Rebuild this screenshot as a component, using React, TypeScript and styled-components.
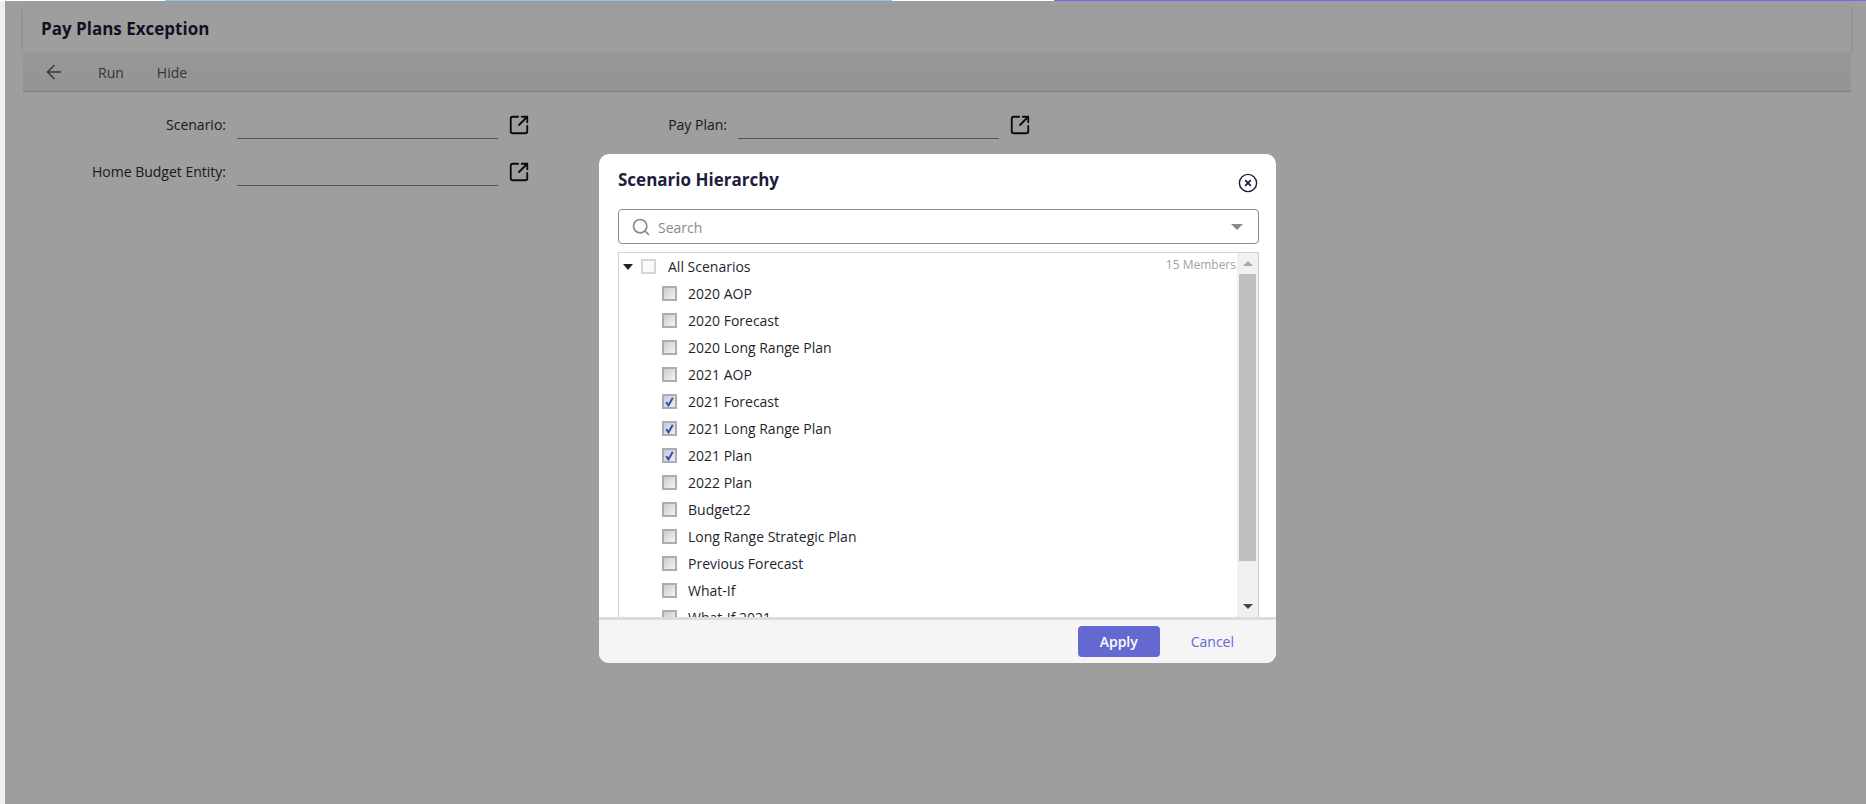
import { ArrowLeft, Search, SquareArrowOutUpRight } from "lucide-react";
import styled, { createGlobalStyle } from "styled-components";

const GlobalStyle = createGlobalStyle`
  html, body {
    margin: 0;
    padding: 0;
    height: 100%;
    overflow: hidden;
    background: #fff;
    font-family: "Open Sans", "Noto Sans", sans-serif;
  }
  * { box-sizing: border-box; }
`;

const Shell = styled.div`
  position: relative;
  width: 1866px;
  height: 804px;
  overflow: hidden;
  display: flex;
  flex-direction: column;
`;
const TopStrip = styled.div`
  display: flex;
  height: 1px;
  flex: none;
`;
const StripPart = styled.div<{ $w: string; $c: string }>`
  width: ${(p) => p.$w};
  background: ${(p) => p.$c};
`;
const Body = styled.div`
  flex: 1;
  display: flex;
`;
const Rail = styled.div`
  width: 5px;
  background: #efefef;
`;
const Main = styled.main`
  flex: 1;
  padding: 6px 15px 0 18px;
`;
const TitleCard = styled.header`
  height: 45px;
  padding: 0 18px 2px;
  display: flex;
  align-items: center;
  background: #fff;
  box-shadow: 0 1px 3px rgba(0, 0, 0, 0.2);
  font-size: 17px;
  font-weight: 700;
  color: #1d1d3d;
`;
const Toolbar = styled.nav`
  height: 40px;
  display: flex;
  align-items: center;
  padding: 1px 0 0 20px;
  background: linear-gradient(#f6f6f6, #eeeeee);
  border-bottom: 1px solid #cfcfcf;
  font-size: 14px;
  font-weight: 500;
  color: #555;
`;
const ToolButton = styled.span<{ $gap: number }>`
  display: inline-flex;
  margin-right: ${(p) => p.$gap}px;
`;
const FormGrid = styled.div`
  display: grid;
  grid-template-columns: 523px 540px;
  row-gap: 19px;
  padding-top: 19px;
`;
const Field = styled.div<{ $labelW: number }>`
  display: grid;
  grid-template-columns: ${(p) => p.$labelW}px 261px 22px;
  column-gap: 10px;
  align-items: center;
  height: 28px;
`;
const Label = styled.label`
  text-align: right;
  font-size: 14px;
  color: #2c2c2c;
  padding: 0 1px 2px 0;
`;
const Underline = styled.div`
  height: 28px;
  border-bottom: 1px solid #8a8a8a;
`;
const OpenIcon = styled(SquareArrowOutUpRight)`
  width: 22px;
  height: 22px;
  color: #111;
`;

const Overlay = styled.div`
  position: absolute;
  inset: 1px 0 0 5px;
  background: rgba(0, 0, 0, 0.38);
  padding: 153px 0 0 594px;
`;
const Modal = styled.section`
  width: 677px;
  height: 509px;
  display: flex;
  flex-direction: column;
  background: #fff;
  border-radius: 10px;
  overflow: hidden;
`;
const ModalHead = styled.div`
  height: 55px;
  padding: 0 18px 4px 19px;
  display: flex;
  justify-content: space-between;
  align-items: center;
`;
const ModalTitle = styled.h2`
  margin: 0;
  font-size: 17px;
  font-weight: 700;
  color: #1d1d3d;
`;
const CloseIcon = styled.svg`
  width: 20px;
  height: 20px;
  margin-top: 6px;
`;
const SearchBox = styled.div`
  margin: 0 17px 0 19px;
  height: 35px;
  display: flex;
  align-items: center;
  padding: 0 15px 0 12px;
  border: 1px solid #8f8f8f;
  border-radius: 4px;
  font-size: 14px;
  color: #8a8a8a;
  flex: none;
`;
const SearchGlyph = styled(Search)`
  width: 20px;
  height: 20px;
  color: #8a8a8a;
  margin-right: 7px;
`;
const Placeholder = styled.span`
  flex: 1;
  padding-top: 1px;
`;
const Caret = styled.span<{ $dir: "up" | "down"; $c: string; $w: number }>`
  width: 0;
  height: 0;
  border-left: ${(p) => p.$w}px solid transparent;
  border-right: ${(p) => p.$w}px solid transparent;
  ${(p) =>
    p.$dir === "down"
      ? `border-top: ${p.$w}px solid ${p.$c};`
      : `border-bottom: ${p.$w}px solid ${p.$c};`}
`;
const ListBox = styled.div`
  margin: 8px 17px 0 19px;
  flex: 1;
  min-height: 0;
  display: flex;
  border: 1px solid #d2d2d2;
  border-bottom: 0;
  overflow: hidden;
`;
const Tree = styled.div`
  flex: 1;
  position: relative;
  overflow: hidden;
`;
const Row = styled.div<{ $indent: number }>`
  height: 27px;
  display: flex;
  align-items: center;
  padding-left: ${(p) => p.$indent}px;
  font-size: 14px;
  color: #1f1f30;
  white-space: nowrap;
`;
const RootCaret = styled.span`
  width: 0;
  height: 0;
  margin-right: 8px;
  border-left: 5px solid transparent;
  border-right: 5px solid transparent;
  border-top: 6px solid #222;
`;
const Check = styled.span<{ $root?: boolean; $on?: boolean }>`
  width: 15px;
  height: 15px;
  flex: none;
  margin-right: ${(p) => (p.$root ? 12 : 11)}px;
  display: flex;
  align-items: center;
  justify-content: center;
  border: 2px solid ${(p) => (p.$root ? "#d6d6d6" : "#adadad")};
  background: ${(p) =>
    p.$root
      ? "#fafafa"
      : p.$on
        ? "linear-gradient(135deg, #c6c9da, #eceef5)"
        : "linear-gradient(135deg, #cbcbcb, #f4f4f4)"};
`;
const MemberCount = styled.span`
  position: absolute;
  top: 3px;
  right: 1px;
  font-size: 12px;
  color: #a2a2a2;
`;
const Scrollbar = styled.div`
  width: 21px;
  flex: none;
  display: flex;
  flex-direction: column;
  align-items: center;
  background: #f0f0f0;
`;
const ScrollEnd = styled.div`
  height: 21px;
  flex: none;
  display: flex;
  align-items: center;
  justify-content: center;
`;
const Thumb = styled.div`
  width: 17px;
  height: 287px;
  background: #bfbfbf;
`;
const Spacer = styled.div`
  flex: 1;
`;
const Footer = styled.footer`
  height: 46px;
  flex: none;
  display: flex;
  align-items: center;
  padding: 0 42px 0 0;
  justify-content: flex-end;
  gap: 31px;
  background: #f5f5f5;
  border-top: 3px solid #dcdcdc;
`;
const ApplyButton = styled.button`
  width: 82px;
  height: 31px;
  border: 0;
  border-radius: 4px;
  background: #6369d1;
  color: #fff;
  font: 600 14px "Open Sans", sans-serif;
`;
const CancelButton = styled.button`
  border: 0;
  padding: 0;
  background: none;
  color: #6369d1;
  font: 400 14px "Open Sans", sans-serif;
`;

const scenarios = [
  { name: "2020 AOP" },
  { name: "2020 Forecast" },
  { name: "2020 Long Range Plan" },
  { name: "2021 AOP" },
  { name: "2021 Forecast", checked: true },
  { name: "2021 Long Range Plan", checked: true },
  { name: "2021 Plan", checked: true },
  { name: "2022 Plan" },
  { name: "Budget22" },
  { name: "Long Range Strategic Plan" },
  { name: "Previous Forecast" },
  { name: "What-If" },
  { name: "What-If 2021" },
];

export default function App() {
  return (
    <>
      <GlobalStyle />
      <Shell>
        <TopStrip>
          <StripPart $w="165px" $c="#fff" />
          <StripPart $w="727px" $c="#8cc4ee" />
          <StripPart $w="162px" $c="#fff" />
          <StripPart $w="812px" $c="#7b68ee" />
        </TopStrip>
        <Body>
          <Rail />
          <Main>
            <TitleCard>Pay Plans Exception</TitleCard>
            <Toolbar>
              <ToolButton $gap={33}>
                <ArrowLeft size={22} color="#555" strokeWidth={1.6} />
              </ToolButton>
              <ToolButton $gap={33}>Run</ToolButton>
              <ToolButton $gap={0}>Hide</ToolButton>
            </Toolbar>
            <FormGrid>
              <Field $labelW={204}>
                <Label>Scenario:</Label>
                <Underline />
                <OpenIcon />
              </Field>
              <Field $labelW={182}>
                <Label>Pay Plan:</Label>
                <Underline />
                <OpenIcon />
              </Field>
              <Field $labelW={204}>
                <Label>Home Budget Entity:</Label>
                <Underline />
                <OpenIcon />
              </Field>
            </FormGrid>
          </Main>
        </Body>
        <Overlay>
          <Modal>
            <ModalHead>
              <ModalTitle>Scenario Hierarchy</ModalTitle>
              <CloseIcon viewBox="0 0 20 20" fill="none" stroke="#1d1d3d">
                <circle cx="10" cy="10" r="8.6" strokeWidth="1.4" />
                <path d="M7.2 7.2l5.6 5.6M12.8 7.2l-5.6 5.6" strokeWidth="1.8" />
              </CloseIcon>
            </ModalHead>
            <SearchBox>
              <SearchGlyph />
              <Placeholder>Search</Placeholder>
              <Caret $dir="down" $c="#8a8a8a" $w={6} />
            </SearchBox>
            <ListBox>
              <Tree>
                <MemberCount>15 Members</MemberCount>
                <Row $indent={4}>
                  <RootCaret />
                  <Check $root />
                  All Scenarios
                </Row>
                {scenarios.map((s) => (
                  <Row key={s.name} $indent={43}>
                    <Check $on={s.checked}>
                      {s.checked && (
                        <svg width="9" height="10" viewBox="0 0 9 10" fill="none">
                          <path d="M1.2 5.2L3.5 8.4L7.8 0.8" stroke="#3d4aa8" strokeWidth="2" />
                        </svg>
                      )}
                    </Check>
                    {s.name}
                  </Row>
                ))}
              </Tree>
              <Scrollbar>
                <ScrollEnd>
                  <Caret $dir="up" $c="#a8a8a8" $w={5} />
                </ScrollEnd>
                <Thumb />
                <Spacer />
                <ScrollEnd>
                  <Caret $dir="down" $c="#444" $w={5} />
                </ScrollEnd>
              </Scrollbar>
            </ListBox>
            <Footer>
              <ApplyButton>Apply</ApplyButton>
              <CancelButton>Cancel</CancelButton>
            </Footer>
          </Modal>
        </Overlay>
      </Shell>
    </>
  );
}
